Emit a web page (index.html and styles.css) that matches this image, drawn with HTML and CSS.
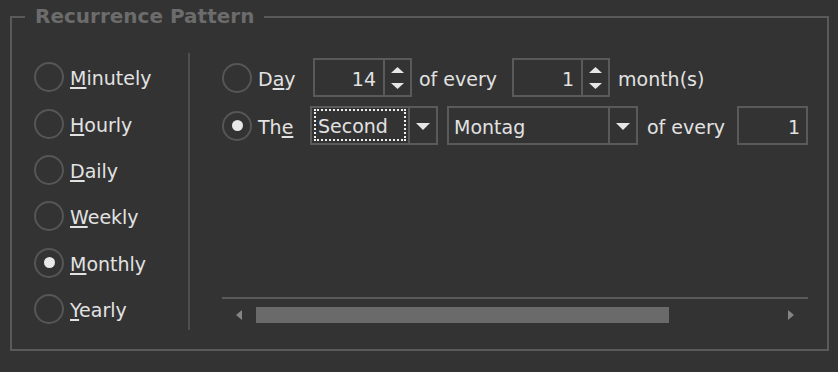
FILE: index.html
```html
<!DOCTYPE html>
<html lang="en">
<head>
<meta charset="utf-8">
<title>Recurrence Pattern</title>
<link rel="stylesheet" href="styles.css">
</head>
<body>
<div class="group">
  <div class="legend">Recurrence Pattern</div>
  <div class="freqs">
    <div class="opt"><span class="radio"></span><span class="txt"><u>M</u>inutely</span></div>
    <div class="opt"><span class="radio"></span><span class="txt"><u>H</u>ourly</span></div>
    <div class="opt"><span class="radio"></span><span class="txt"><u>D</u>aily</span></div>
    <div class="opt"><span class="radio"></span><span class="txt"><u>W</u>eekly</span></div>
    <div class="opt"><span class="radio on"></span><span class="txt"><u>M</u>onthly</span></div>
    <div class="opt"><span class="radio"></span><span class="txt"><u>Y</u>early</span></div>
  </div>
  <div class="sep"></div>
  <div class="detail">
    <div class="row">
      <span class="radio"></span>
      <span class="lbl lbl-day">D<u>a</u>y</span>
      <div class="spin spin-day">
        <span class="val">14</span>
        <span class="arrows">
          <svg width="13" height="6" viewBox="0 0 13 6"><path d="M6.5 0 L13 6 L0 6 Z" fill="#e6e6e6"/></svg>
          <svg width="13" height="6" viewBox="0 0 13 6"><path d="M0 0 L13 0 L6.5 6 Z" fill="#e6e6e6"/></svg>
        </span>
      </div>
      <span class="lbl lbl-of1">of every</span>
      <div class="spin spin-month">
        <span class="val">1</span>
        <span class="arrows">
          <svg width="13" height="6" viewBox="0 0 13 6"><path d="M6.5 0 L13 6 L0 6 Z" fill="#e6e6e6"/></svg>
          <svg width="13" height="6" viewBox="0 0 13 6"><path d="M0 0 L13 0 L6.5 6 Z" fill="#e6e6e6"/></svg>
        </span>
      </div>
      <span class="lbl lbl-mo">month(s)</span>
    </div>
    <div class="row">
      <span class="radio on"></span>
      <span class="lbl lbl-the">Th<u>e</u></span>
      <div class="combo combo-ord">
        <span class="cval"><span class="focus">Second</span></span>
        <span class="drop"><svg width="14" height="7" viewBox="0 0 14 7"><path d="M0 0 L14 0 L7 7 Z" fill="#e6e6e6"/></svg></span>
      </div>
      <div class="combo combo-day">
        <span class="cval plain">Montag</span>
        <span class="drop"><svg width="14" height="7" viewBox="0 0 14 7"><path d="M0 0 L14 0 L7 7 Z" fill="#e6e6e6"/></svg></span>
      </div>
      <span class="lbl lbl-of2">of every</span>
      <div class="box box-every">1</div>
    </div>
    <div class="fill"></div>
    <div class="hline"></div>
    <div class="hscroll">
      <span class="sbtn"><svg width="6" height="10" viewBox="0 0 6 10"><path d="M6 0 L6 10 L0 5 Z" fill="#858585"/></svg></span>
      <div class="track"><div class="thumb"></div></div>
      <span class="sbtn"><svg width="6" height="10" viewBox="0 0 6 10"><path d="M0 0 L6 5 L0 10 Z" fill="#858585"/></svg></span>
    </div>
  </div>
</div>
</body>
</html>
```
FILE: styles.css
```css
html, body {
  margin: 0;
  padding: 0;
}
body {
  background: #333333;
  width: 838px;
  height: 372px;
  overflow: hidden;
  font-family: "DejaVu Sans", sans-serif;
  font-size: 19px;
  color: #e2e2e2;
}
u {
  text-decoration-thickness: 2px;
  text-underline-offset: 2px;
}
.group {
  position: relative;
  box-sizing: border-box;
  width: 819px;
  height: 335px;
  margin: 16px 0 0 10px;
  border: 2px solid #5a5a5a;
  display: flex;
}
.legend {
  position: absolute;
  top: -13px;
  left: 13px;
  padding: 0 10px;
  background: #333333;
  font-weight: bold;
  font-size: 20px;
  line-height: 22px;
  color: #6c6c6c;
}
.freqs {
  width: 176px;
  box-sizing: border-box;
  padding: 36px 0 0 22px;
  display: flex;
  flex-direction: column;
}
.opt {
  height: 46.4px;
  display: flex;
  align-items: center;
  gap: 6px;
}
.txt {
  padding-top: 2px;
}
.radio {
  width: 30px;
  height: 30px;
  box-sizing: border-box;
  border: 2px solid #565656;
  border-radius: 50%;
  display: flex;
  align-items: center;
  justify-content: center;
  flex: none;
}
.radio.on::after {
  content: "";
  width: 11px;
  height: 11px;
  border-radius: 50%;
  background: #e8e8e8;
}
.sep {
  width: 2px;
  background: #4e4e4e;
  margin: 35px 0 19px;
}
.detail {
  flex: 1;
  display: flex;
  flex-direction: column;
  padding: 40px 19px 18px 32px;
}
.row {
  display: flex;
  align-items: center;
  height: 39px;
}
.row + .row {
  margin-top: 9px;
}
.lbl {
  box-sizing: border-box;
  flex: none;
  padding-top: 2px;
}
.lbl-day { width: 61px; padding-left: 6px; }
.lbl-the { width: 58px; padding-left: 6px; }
.lbl-of1 { width: 100px; padding-left: 7px; }
.lbl-of2 { width: 99px; padding-left: 9px; }
.lbl-mo { padding-left: 8px; }

.spin, .combo, .box {
  box-sizing: border-box;
  height: 39px;
  border: 2px solid #5a5a5a;
  display: flex;
  flex: none;
}
.spin-day { width: 99px; }
.spin-month { width: 98px; }
.spin .val {
  flex: 1;
  display: flex;
  align-items: center;
  justify-content: flex-end;
  padding: 2px 7px 0 0;
}
.arrows {
  width: 25px;
  border-left: 2px solid #5a5a5a;
  display: flex;
  flex-direction: column;
  align-items: center;
  justify-content: space-between;
  padding: 7px 0 6px;
}
.arrows svg { display: block; }

.combo-ord { width: 128px; }
.combo-day { width: 191px; margin-left: 9px; }
.cval {
  flex: 1;
  display: flex;
  align-items: stretch;
  padding: 1px 2px 2px 2px;
}
.cval.plain {
  align-items: center;
  padding: 2px 0 0 5px;
}
.focus {
  flex: 1;
  border: 2px dotted #f0f0f0;
  display: flex;
  align-items: center;
  padding: 2px 0 0 2px;
}
.drop {
  width: 26px;
  border-left: 2px solid #5a5a5a;
  display: flex;
  align-items: center;
  justify-content: center;
}
.drop svg { display: block; margin-top: 1px; }

.box-every {
  width: 71px;
  align-items: center;
  justify-content: flex-end;
  padding: 2px 6px 0 0;
}

.fill { flex: 1; }
.hline {
  height: 2px;
  background: #5a5a5a;
}
.hscroll {
  height: 32px;
  display: flex;
  align-items: center;
}
.sbtn {
  width: 34px;
  height: 32px;
  display: flex;
  align-items: center;
  justify-content: center;
  flex: none;
}
.sbtn svg { display: block; }
.track {
  flex: 1;
  height: 16px;
}
.thumb {
  width: 413px;
  height: 16px;
  background: #6a6a6a;
}
```
